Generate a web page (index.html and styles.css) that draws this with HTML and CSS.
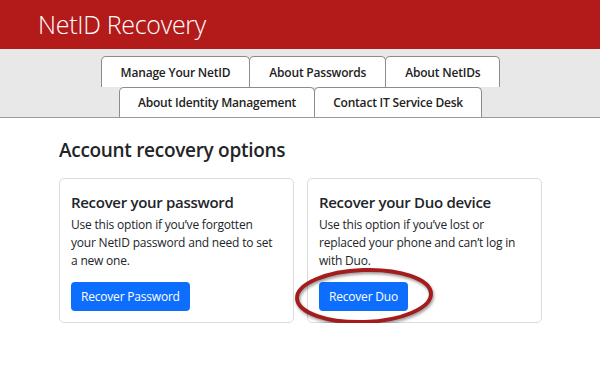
FILE: index.html
```html
<!DOCTYPE html>
<html lang="en">
<head>
    <meta charset="UTF-8">
    <meta name="viewport" content="width=device-width, initial-scale=1.0">
    <title>NetID Recovery</title>
    <link rel="stylesheet" href="styles.css">
</head>
<body>
    <header class="site-header">
        <h1>NetID Recovery</h1>
    </header>

    <!-- Tab navigation -->
    <nav class="tabs">
        <div class="tab-row tab-row-top">
            <a href="#manage" class="tab">Manage Your NetID</a>
            <a href="#passwords" class="tab">About Passwords</a>
            <a href="#netids" class="tab">About NetIDs</a>
        </div>
        <div class="tab-row tab-row-bottom">
            <a href="#identity" class="tab">About Identity Management</a>
            <a href="#contact" class="tab">Contact IT Service Desk</a>
        </div>
    </nav>

    <main class="content">
        <h2>Account recovery options</h2>
        <div class="cards">
            <div class="card">
                <h3>Recover your password</h3>
                <p>Use this option if you’ve forgotten your NetID password and need to set a new one.</p>
                <a href="#password" class="btn">Recover Password</a>
            </div>
            <div class="card">
                <h3>Recover your Duo device</h3>
                <p>Use this option if you’ve lost or replaced your phone and can’t log in with Duo.</p>
                <div class="btn-wrap">
                    <a href="#duo" class="btn">Recover Duo</a>
                    <!-- highlight ring drawn over the button -->
                    <svg class="ring" width="146" height="62" viewBox="0 0 146 62">
                        <ellipse cx="71" cy="30" rx="67" ry="26" fill="none" stroke="#a31d1f" stroke-width="4" transform="rotate(-2 71 30)"/>
                    </svg>
                </div>
            </div>
        </div>
    </main>
</body>
</html>
```

FILE: styles.css
```css
* {
    box-sizing: border-box;
}
body {
    margin: 0;
    padding: 0;
    font-family: "Open Sans", Arial, sans-serif;
    color: #212529;
    background: #fff;
}
.site-header {
    background-color: #b31b1b;
    height: 49px;
    padding-left: 38px;
}
.site-header h1 {
    margin: 0;
    color: #fff;
    font-weight: 300;
    font-size: 25px;
    letter-spacing: -0.3px;
    line-height: 49px;
}
.tabs {
    background-color: #e8e8e8;
    border-bottom: 1px solid #9a9a9a;
    padding-top: 7px;
}
.tab-row {
    display: flex;
    justify-content: center;
}
.tab {
    display: block;
    background: #fff;
    color: #222;
    text-decoration: none;
    font-size: 12px;
    font-weight: 600;
    letter-spacing: -0.2px;
    border: 1px solid #8c8c8c;
    border-bottom: none;
    border-radius: 5px 5px 0 0;
    padding: 0 19px;
    margin-right: -1px;
}
.tab-row-top .tab {
    height: 31px;
    line-height: 31px;
}
.tab-row-bottom .tab {
    height: 30px;
    line-height: 29px;
    padding: 0 18px;
}
.content {
    padding: 0 59px;
}
.content h2 {
    margin: 19px 0 15px;
    font-size: 19px;
    font-weight: 600;
    letter-spacing: -0.3px;
    line-height: 26px;
}
.cards {
    display: grid;
    grid-template-columns: 235px 235px;
    gap: 13px;
}
.card {
    border: 1px solid #dcdcdc;
    border-radius: 5px;
    height: 145px;
    padding: 12px 11px;
}
.card h3 {
    margin: 0 0 3px;
    font-size: 15px;
    font-weight: 600;
    letter-spacing: -0.3px;
    line-height: 22px;
}
.card p {
    margin: 0 0 12px;
    max-width: 205px;
    font-size: 12px;
    letter-spacing: -0.2px;
    line-height: 18px;
    height: 54px;
}
.btn {
    display: inline-block;
    background-color: #0d6efd;
    color: #fff;
    text-decoration: none;
    font-size: 12px;
    letter-spacing: -0.2px;
    border-radius: 4px;
    padding: 0 10px;
    height: 29px;
    line-height: 29px;
}
.btn-wrap {
    position: relative;
}
.ring {
    position: absolute;
    left: -26px;
    top: -16px;
    width: 146px;
    height: 62px;
    overflow: visible;
    filter: drop-shadow(1px 2px 1.5px rgba(0, 0, 0, 0.4));
}
```
